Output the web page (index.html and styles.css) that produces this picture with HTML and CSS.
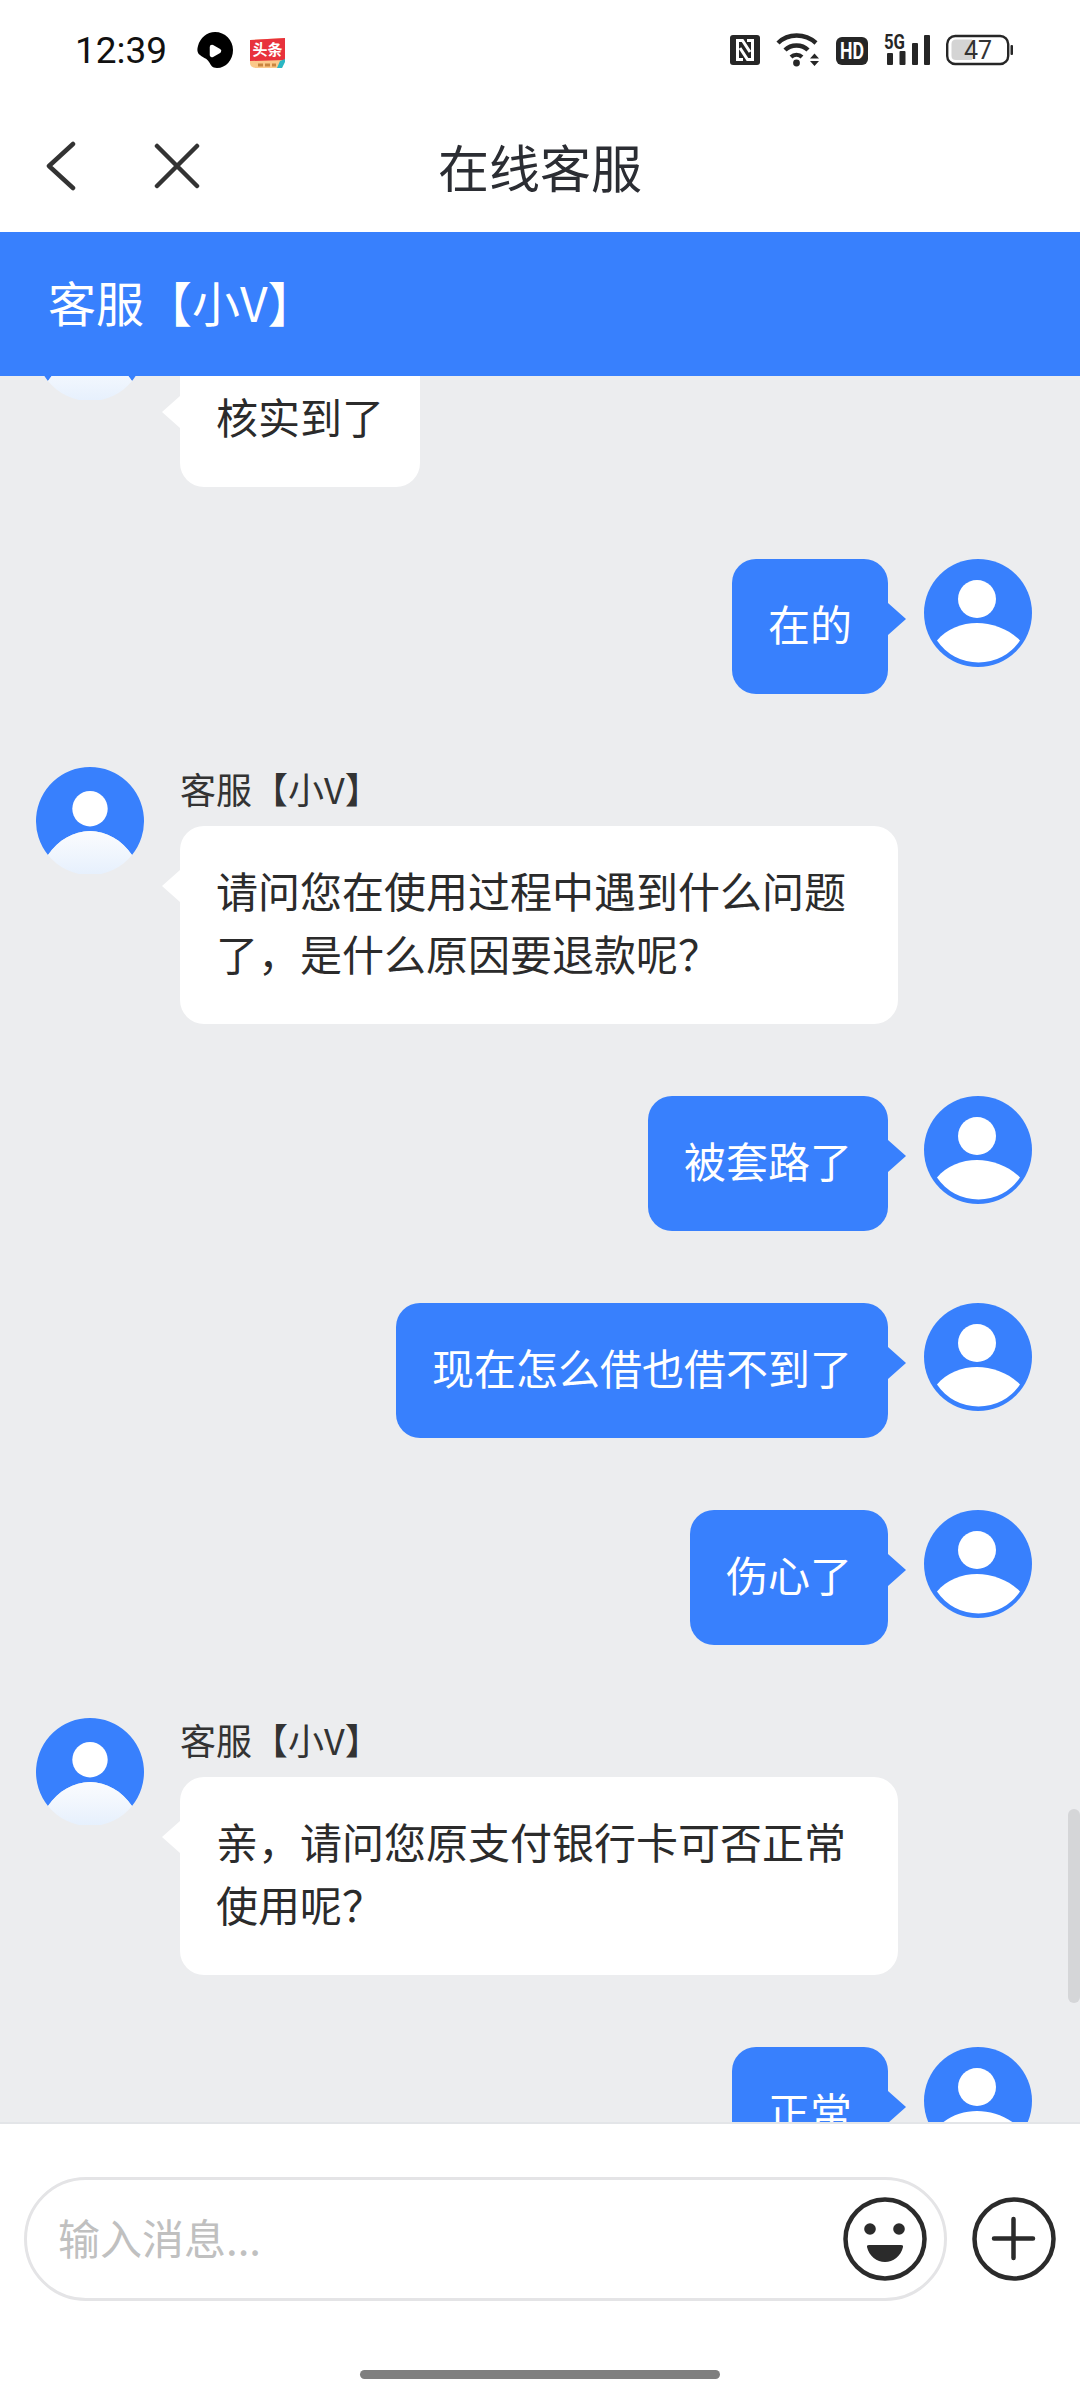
FILE: index.html
```html
<!DOCTYPE html>
<html lang="zh-CN">
<head>
    <meta charset="UTF-8">
    <meta name="viewport" content="width=device-width, initial-scale=1.0">
    <title>在线客服</title>
    <link rel="stylesheet" href="styles.css">
</head>
<body>
    <div class="status-bar">
        <span class="time">12:39</span>
        <svg class="status-icon blob" width="36" height="36" viewBox="0 0 36 36">
            <path d="M18 0C28 0 36 8 36 18C36 28 29 36 20 36C15 36 14 33 12 30C10 26 6 26 3 23C0 21 0 17 1 14C3 6 10 0 18 0Z" fill="#000"/>
            <path d="M15 15L22 19L15 23Z" fill="#fff" stroke="#fff" stroke-width="4.500" stroke-linejoin="round"/>
        </svg>
        <svg class="status-icon toutiao" width="37" height="36" viewBox="0 0 37 36">
            <path d="M1 31V8L36 6V27L33 36H8Q1 36 1 31Z" fill="#fbc98a"/>
            <path d="M1 8L36 6V28L1 29Z" fill="#e8323c"/>
            <text x="18.500" y="23" class="toutiao-text">头条</text>
            <path d="M9 33H27" stroke="#c9853f" stroke-width="3" stroke-dasharray="5 2"/>
            <path d="M36 27V30L33 36H28L31 29Z" fill="#2bb7c4"/>
        </svg>
        <div class="status-right">
            <svg class="status-icon" width="30" height="36" viewBox="0 0 30 36">
                <rect y="3" width="30" height="30" rx="3" fill="#262626"/>
                <path d="M13 27.500H7.500V8.500H12.500L20 20" fill="none" stroke="#fff" stroke-width="3"/>
                <path d="M17 8.500H22.500V27.500H17.500L10 16" fill="none" stroke="#fff" stroke-width="3"/>
            </svg>
            <svg class="status-icon" width="44" height="36" viewBox="0 0 44 36">
                <path d="M2 11C12 1 29 1 40 11" fill="none" stroke="#262626" stroke-width="4.400"/>
                <path d="M9 18C15 12 26 12 32 18" fill="none" stroke="#262626" stroke-width="4.400"/>
                <path d="M15 25C18 22 23 22 26 25" fill="none" stroke="#262626" stroke-width="4"/>
                <circle cx="20.500" cy="31" r="3.400" fill="#262626"/>
                <path d="M34 26.500L38.500 21.500L43 26.500ZM34 29H43L38.500 34Z" fill="#262626"/>
            </svg>
            <svg class="status-icon" width="32" height="36" viewBox="0 0 32 36">
                <rect y="5" width="32" height="28" rx="6" fill="#262626"/>
                <text x="16" y="27" class="hd-text" textLength="24" lengthAdjust="spacingAndGlyphs">HD</text>
            </svg>
            <svg class="status-icon" width="46" height="36" viewBox="0 0 46 36">
                <text x="0" y="16.500" class="fiveg-text" textLength="21" lengthAdjust="spacingAndGlyphs">5G</text>
                <rect x="3" y="21" width="6" height="12" rx="1" fill="#262626"/>
                <rect x="15.500" y="19" width="6" height="14" rx="1" fill="#262626"/>
                <rect x="28" y="11" width="6" height="22" rx="1" fill="#262626"/>
                <rect x="40" y="3" width="6" height="30" rx="1" fill="#262626"/>
            </svg>
            <svg class="status-icon battery" width="67" height="36" viewBox="0 0 67 36">
                <rect x="1.200" y="4" width="61" height="28" rx="8" fill="none" stroke="#262626" stroke-width="2.400"/>
                <path d="M10 7.500H26V28H10Q5.500 28 5.500 24V12Q5.500 7.500 10 7.500Z" fill="#d4d4d4"/>
                <rect x="64.500" y="13" width="2.500" height="10" rx="1" fill="#262626"/>
                <text x="32" y="27" class="battery-text">47</text>
            </svg>
        </div>
    </div>

    <div class="nav">
        <div class="nav-left">
            <svg class="back" width="30" height="50" viewBox="0 0 30 50">
                <path d="M27 3L3 25L27 47" fill="none" stroke="#333" stroke-width="4.500" stroke-linecap="round" stroke-linejoin="round"/>
            </svg>
            <svg class="close" width="46" height="46" viewBox="0 0 46 46">
                <path d="M3 3L43 43M43 3L3 43" fill="none" stroke="#333" stroke-width="4.500" stroke-linecap="round"/>
            </svg>
        </div>
        <div class="nav-title">在线客服</div>
    </div>

    <div class="chat-header">客服【小V】</div>

    <div class="chat">
        <div class="chat-list">
            <div class="msg">
                <svg class="avatar" viewBox="0 0 108 108"><use href="#agent-avatar"/></svg>
                <div class="msg-body">
                    <div class="msg-name">客服【小V】</div>
                    <div class="bubble">核实到了</div>
                </div>
            </div>
            <div class="msg mine">
                <div class="bubble">在的</div>
                <svg class="avatar" viewBox="0 0 108 108"><use href="#user-avatar"/></svg>
            </div>
            <div class="msg">
                <svg class="avatar" viewBox="0 0 108 108"><use href="#agent-avatar"/></svg>
                <div class="msg-body">
                    <div class="msg-name">客服【小V】</div>
                    <div class="bubble">请问您在使用过程中遇到什么问题了，是什么原因要退款呢？</div>
                </div>
            </div>
            <div class="msg mine">
                <div class="bubble">被套路了</div>
                <svg class="avatar" viewBox="0 0 108 108"><use href="#user-avatar"/></svg>
            </div>
            <div class="msg mine">
                <div class="bubble">现在怎么借也借不到了</div>
                <svg class="avatar" viewBox="0 0 108 108"><use href="#user-avatar"/></svg>
            </div>
            <div class="msg mine">
                <div class="bubble">伤心了</div>
                <svg class="avatar" viewBox="0 0 108 108"><use href="#user-avatar"/></svg>
            </div>
            <div class="msg">
                <svg class="avatar" viewBox="0 0 108 108"><use href="#agent-avatar"/></svg>
                <div class="msg-body">
                    <div class="msg-name">客服【小V】</div>
                    <div class="bubble">亲，请问您原支付银行卡可否正常使用呢？</div>
                </div>
            </div>
            <div class="msg mine">
                <div class="bubble">正常</div>
                <svg class="avatar" viewBox="0 0 108 108"><use href="#user-avatar"/></svg>
            </div>
        </div>
        <div class="scroll-thumb"></div>
    </div>

    <div class="footer">
        <div class="input-row">
            <div class="input-box">
                <span class="placeholder">输入消息...</span>
                <svg width="84" height="84" viewBox="0 0 84 84">
                    <circle cx="42" cy="42" r="39.500" fill="none" stroke="#2b2b2b" stroke-width="4.500"/>
                    <circle cx="27" cy="32" r="5.800" fill="#2b2b2b"/>
                    <circle cx="56" cy="32" r="5.800" fill="#2b2b2b"/>
                    <path d="M26 48H58Q60.500 48 60 50C58 59 50 65 42 65C34 65 26 59 24 50Q23.500 48 26 48Z" fill="#2b2b2b"/>
                </svg>
            </div>
            <svg width="84" height="84" viewBox="0 0 84 84">
                <circle cx="42" cy="42" r="39.500" fill="none" stroke="#2b2b2b" stroke-width="4.500"/>
                <path d="M22 41.500H61M41.500 22V61" fill="none" stroke="#2b2b2b" stroke-width="4.500" stroke-linecap="round"/>
            </svg>
        </div>
        <div class="home-bar"></div>
    </div>

    <!-- avatars are shared by every message -->
    <svg class="defs" width="0" height="0">
        <defs>
            <linearGradient id="bodyFade" x1="0" y1="0" x2="0" y2="1">
                <stop offset="0" stop-color="#fbfcfe"/>
                <stop offset="1" stop-color="#e6f0fd"/>
            </linearGradient>
            <g id="agent-avatar">
                <path d="M12 89A54 54 0 1 1 96 89C86 74 70 65 54 65C38 65 22 74 12 89Z" fill="#3880fd"/>
                <path d="M12 89C22 74 38 65 54 65C70 65 86 74 96 89A54 54 0 0 1 12 89Z" fill="url(#bodyFade)"/>
                <circle cx="54" cy="42.700" r="17.700" fill="#fff"/>
            </g>
            <g id="user-avatar">
                <circle cx="54" cy="54" r="54" fill="#3880fd"/>
                <circle cx="53" cy="40" r="19" fill="#fff"/>
                <path d="M13 81.500C22 70 38 64 53 64C68 64 85 70 96 81.500A50 50 0 0 1 13 81.500Z" fill="#fff"/>
            </g>
        </defs>
    </svg>
</body>
</html>
```

FILE: styles.css
```css
* {
    box-sizing: border-box;
}
body {
    margin: 0;
    height: 2400px;
    display: flex;
    flex-direction: column;
    background-color: white;
    color: #2b2b2b;
    font-family: "Noto Sans CJK SC", "Noto Sans", sans-serif;
    overflow: hidden;
}
svg {
    display: block;
    flex-shrink: 0;
}
.defs {
    position: absolute;
}

/* status bar */
.status-bar {
    height: 100px;
    padding: 0 67px 0 75px;
    display: flex;
    align-items: center;
    flex-shrink: 0;
}
.time {
    width: 92px;
    font-family: Roboto, sans-serif;
    font-size: 37px;
    color: #111;
}
.blob {
    margin-left: 30px;
}
.toutiao {
    margin-left: 16px;
}
.toutiao-text {
    font-size: 15px;
    font-weight: 700;
    fill: white;
    text-anchor: middle;
}
.status-right {
    margin-left: auto;
    display: flex;
    align-items: center;
    gap: 16px;
}
.hd-text {
    font-family: Roboto, sans-serif;
    font-size: 23px;
    font-weight: 700;
    fill: white;
    text-anchor: middle;
}
.fiveg-text {
    font-family: Roboto, sans-serif;
    font-size: 21px;
    font-weight: 700;
    fill: #262626;
}
.battery-text {
    font-family: Roboto, sans-serif;
    font-size: 25px;
    fill: #333;
    text-anchor: middle;
}

/* nav */
.nav {
    height: 132px;
    display: grid;
    grid-template-columns: 1fr auto 1fr;
    align-items: center;
    flex-shrink: 0;
}
.nav-left {
    display: flex;
    align-items: center;
    padding-left: 46px;
    gap: 78px;
}
.nav-title {
    font-size: 51px;
    line-height: 1;
    color: #2b2d33;
}

.chat-header {
    height: 144px;
    padding-left: 48px;
    background-color: #3880fd;
    color: white;
    font-size: 48px;
    line-height: 138px;
    flex-shrink: 0;
}

/* messages */
.chat {
    flex: 1;
    min-height: 0;
    position: relative;
    background-color: #ecedef;
    overflow: hidden;
}
.chat-list {
    margin-top: -84px;
    display: flex;
    flex-direction: column;
    gap: 72px;
}
.msg {
    display: flex;
    align-items: flex-start;
    gap: 36px;
    padding: 0 36px;
}
.msg.mine {
    justify-content: flex-end;
    padding-right: 48px;
}
.avatar {
    width: 108px;
    height: 108px;
}
.msg-name {
    height: 60px;
    font-size: 36px;
    line-height: 44px;
    color: #333;
}
.bubble {
    position: relative;
    max-width: 718px;
    padding: 32px 36px 40px;
    border-radius: 24px;
    background-color: white;
    font-size: 42px;
    line-height: 63px;
    color: #2b2b2b;
}
.bubble::before {
    content: "";
    position: absolute;
    top: 44px;
    left: -18px;
    width: 18px;
    height: 32px;
    background-color: inherit;
    clip-path: polygon(100% 0, 0 50%, 100% 100%);
}
.mine .bubble {
    background-color: #3880fd;
    color: white;
}
.mine .bubble::before {
    left: auto;
    right: -18px;
    clip-path: polygon(0 0, 100% 50%, 0 100%);
}
.scroll-thumb {
    position: absolute;
    top: 1433px;
    right: 0;
    width: 12px;
    height: 194px;
    border-radius: 6px;
    background-color: #d5d6d8;
}

/* footer */
.footer {
    height: 278px;
    border-top: 2px solid #e3e5e8;
    padding: 53px 24px 0;
    flex-shrink: 0;
}
.input-row {
    display: flex;
    align-items: center;
    gap: 25px;
}
.input-box {
    flex: 1;
    height: 124px;
    padding: 0 17px 0 31px;
    display: flex;
    align-items: center;
    justify-content: space-between;
    border: 3px solid #e4e4e6;
    border-radius: 62px;
}
.placeholder {
    font-size: 42px;
    line-height: 1;
    padding-bottom: 4px;
    color: #c0c0c0;
}
.home-bar {
    width: 360px;
    height: 9px;
    margin: 69px auto 0;
    border-radius: 5px;
    background-color: #7f7f7f;
}
```
